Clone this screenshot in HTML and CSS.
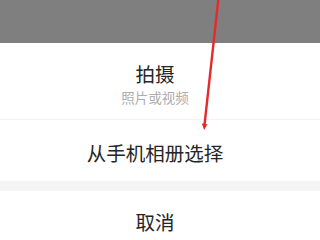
FILE: index.html
```html
<!DOCTYPE html>
<html lang="zh">
<head>
<meta charset="utf-8">
<link rel="stylesheet" href="styles.css">
</head>
<body>
<div class="screen">
  <div class="mask"></div>
  <div class="sheet">
    <div class="item item-main">
      <div class="title">拍摄</div>
      <div class="sub">照片或视频</div>
    </div>
    <div class="item item-album">
      <div class="title">从手机相册选择</div>
    </div>
    <div class="gap"></div>
    <div class="item item-cancel">
      <div class="title">取消</div>
    </div>
  </div>
  <svg class="arrow" width="320" height="240" viewBox="0 0 320 240">
    <line x1="218.5" y1="-2" x2="204.6" y2="124" stroke="#e52a2a" stroke-width="2.4" stroke-linecap="round"/>
    <polygon points="201.8,123.5 207.4,124.2 204.2,130" fill="#e52a2a"/>
  </svg>
</div>
</body>
</html>
```

FILE: styles.css
```css
html, body {
  margin: 0;
  padding: 0;
  background: #ffffff;
}
.screen {
  position: relative;
  width: 320px;
  height: 240px;
  overflow: hidden;
  font-family: "Noto Sans CJK SC", "Noto Sans", sans-serif;
  display: flex;
  flex-direction: column;
}
.mask {
  height: 43px;
  flex: none;
  background: #7f7f7f;
}
.sheet {
  flex: 1;
  background: #ffffff;
  display: flex;
  flex-direction: column;
}
.item {
  display: flex;
  flex-direction: column;
  align-items: center;
  padding-right: 10px;
}
.title {
  font-size: 19.5px;
  line-height: 24px;
  color: #252525;
}
.sub {
  font-size: 13.5px;
  line-height: 18px;
  color: #adadad;
  margin-top: 2px;
}
.item-main {
  padding-top: 19px;
  padding-bottom: 13px;
  border-bottom: 1px solid #f2f2f2;
}
.item-album {
  padding-top: 21px;
  padding-bottom: 16px;
}
.gap {
  height: 10px;
  background: #f4f4f4;
}
.item-cancel {
  padding-top: 19px;
}
.arrow {
  position: absolute;
  left: 0;
  top: 0;
  pointer-events: none;
}
```
